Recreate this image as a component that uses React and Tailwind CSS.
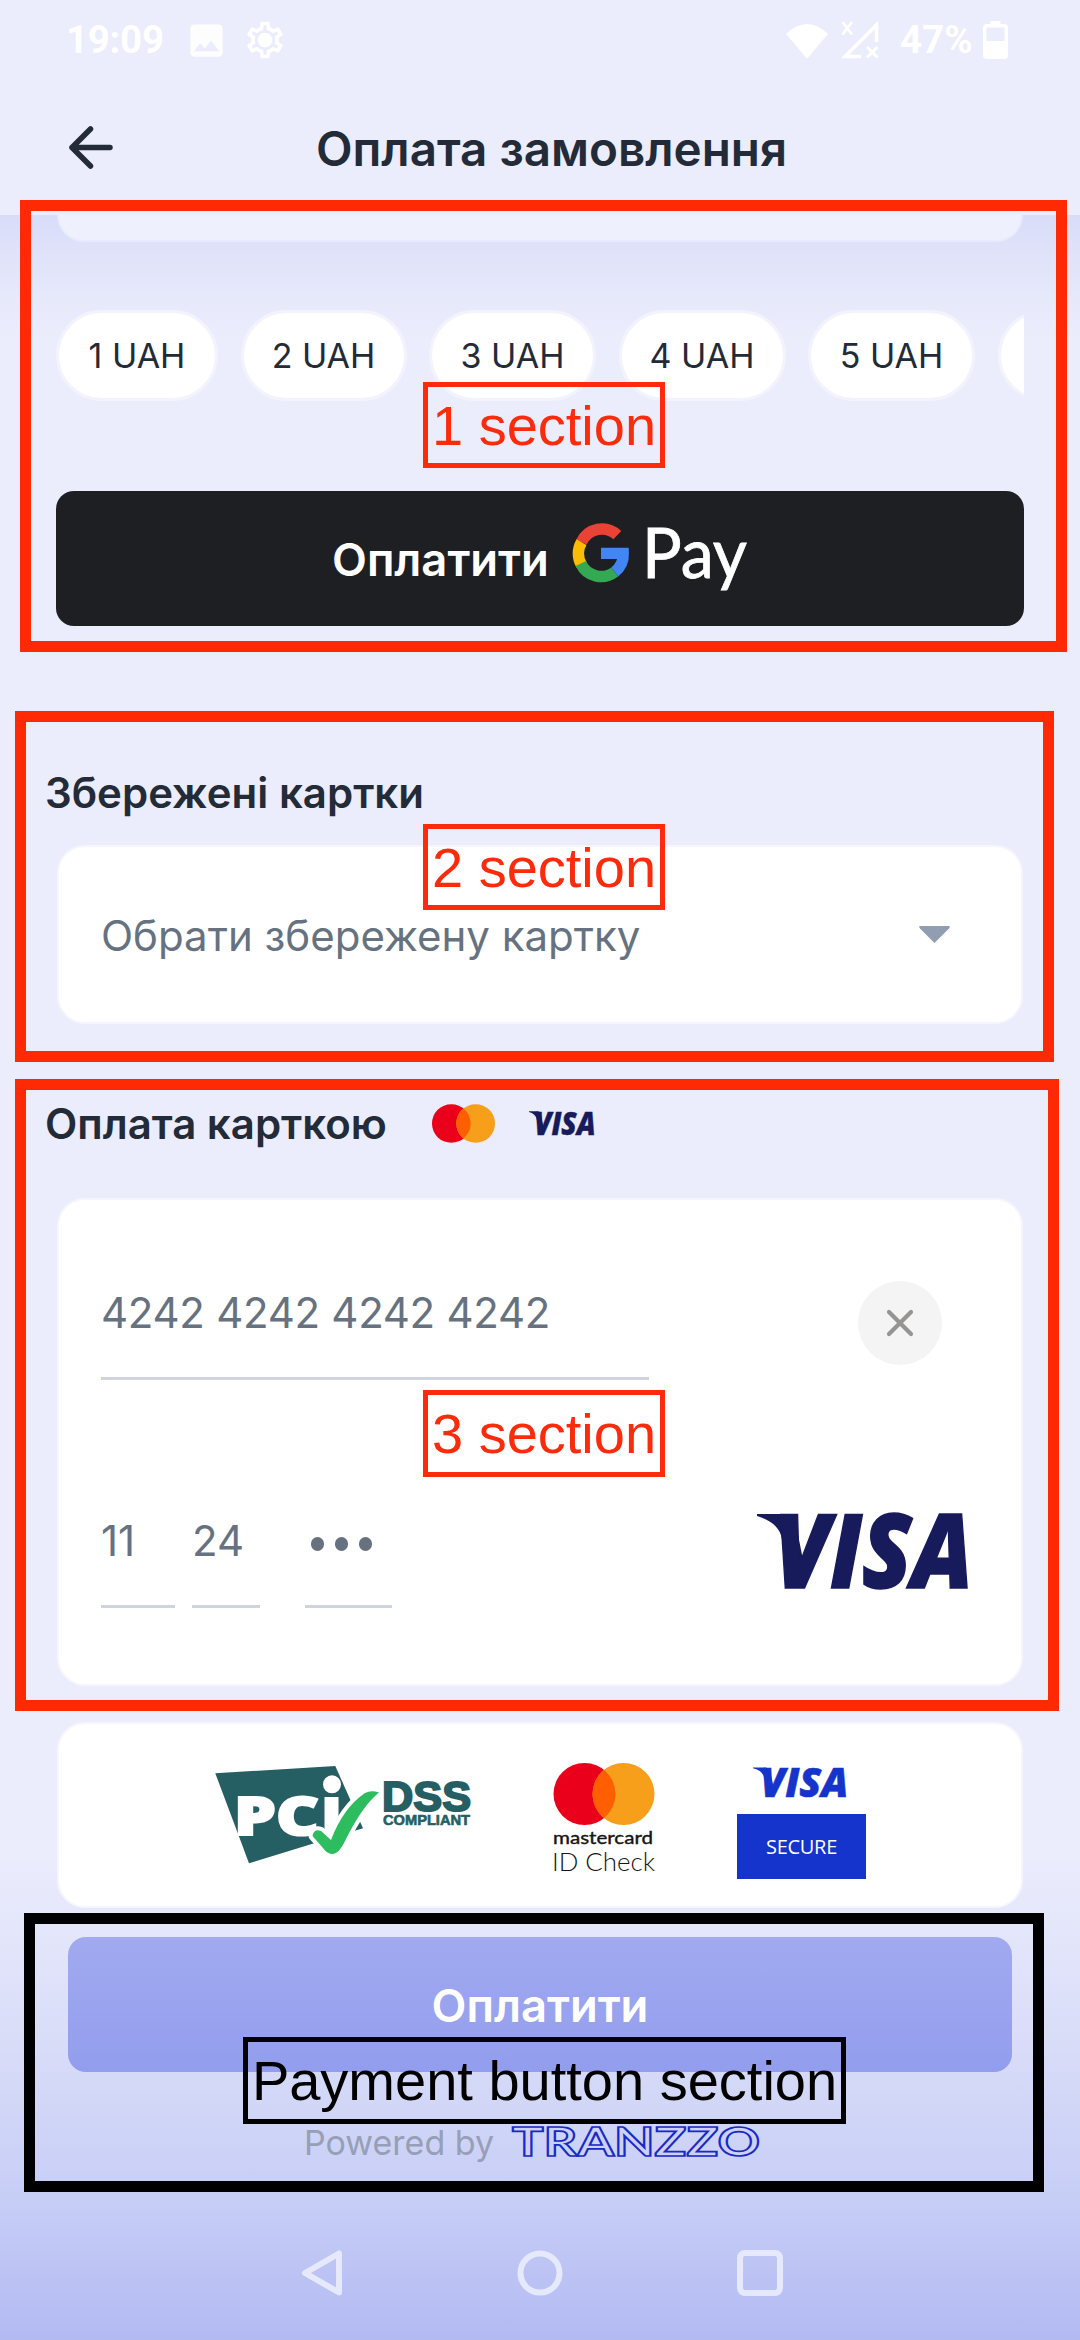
import React from "react";
import { MdImage, MdOutlineSettings } from "react-icons/md";

const amounts = [
  { label: "1 UAH", cls: "w-[162px]" },
  { label: "2 UAH", cls: "w-[166px]" },
  { label: "3 UAH", cls: "w-[167px]" },
  { label: "4 UAH", cls: "w-[167px]" },
  { label: "5 UAH", cls: "w-[167px]" },
  { label: "", cls: "w-[166px]" },
];

function Visa({ className, color }) {
  return (
    <svg className={"overflow-visible " + className} viewBox="0 0 211 75" fill={color} preserveAspectRatio="none">
      <path d="M0 1 H29 Q36.500 2 38.500 9 L50 66 L33 60 L24 22 Q20 9 0 3 Z" />
      <text
        x="17"
        y="74"
        fontFamily="Open Sans"
        fontWeight="800"
        fontStyle="italic"
        fontSize="102"
        stroke={color}
        strokeWidth="1.500"
        textLength="199"
        lengthAdjust="spacingAndGlyphs"
      >
        VISA
      </text>
    </svg>
  );
}

function Mastercard({ className }) {
  return (
    <svg className={className} viewBox="0 0 101 62">
      <circle cx="31" cy="31" r="31" fill="#eb001b" />
      <circle cx="70" cy="31" r="31" fill="#f79e1b" />
      <path d="M50.5 6.9 A31 31 0 0 1 50.5 55.1 A31 31 0 0 1 50.5 6.9 Z" fill="#ff5f00" />
    </svg>
  );
}

function StatusBar() {
  return (
    <div className="flex h-20 shrink-0 items-start text-white">
      <div className="ml-[66px] mt-[15px] w-[119px] font-[Roboto] text-[38.500px] font-bold leading-[50px] tracking-[-0.3px]">19:09</div>
      <MdImage className="mt-[19px] h-[43px] w-[43px] opacity-90" />
      <svg className="ml-[15px] mt-[18px] h-[44px] w-[44px]" viewBox="0 0 44 44">
        <MdOutlineSettings width="44" height="44" size={44} />
        <circle cx="22" cy="22" r="6.5" fill="#fff" />
      </svg>
      <svg className="ml-[499px] mt-[22px] h-[38px] w-[42px]" viewBox="0 0 42 38" fill="#fff">
        <path d="M0 12 Q21 -8 42 12 L22.5 35 Q21 37 19.500 35 Z" />
      </svg>
      <svg className="ml-[13px] mt-[20px] h-[39px] w-[38px]" viewBox="0 0 38 39" fill="none" stroke="#fff">
        <path d="M20 36.500 H4 L35.500 5 V22" strokeWidth="3.500" />
        <path d="M26 27 L36.500 37.500 M36.500 27 L26 37.500" strokeWidth="3" />
        <path d="M1.500 2 L11 14.500 M11 2 L1.500 14.500" strokeWidth="2.700" />
      </svg>
      <div className="ml-[21px] mt-[15px] w-[83px] font-[Roboto] text-[38.500px] font-bold leading-[50px]">47%</div>
      <svg className="mt-[21px] h-[38px] w-[25px]" viewBox="0 0 25 38" fill="none">
        <path d="M7.500 0 H17.500 V4 H7.500 Z" fill="#fff" />
        <rect x="1.750" y="4.750" width="21.500" height="31.500" rx="2" stroke="#fff" strokeWidth="3.500" />
        <path d="M2 20 H23 V36 H2 Z" fill="#fff" />
      </svg>
    </div>
  );
}

function Header() {
  return (
    <div className="flex h-[135px] shrink-0">
      <svg className="ml-[68px] mt-[45px] h-[45px] w-[46px]" viewBox="0 0 46 45" fill="none" stroke="#232b38" strokeWidth="5.500" strokeLinecap="round" strokeLinejoin="round">
        <path d="M42 22.500 H4 M22.500 4 L4 22.500 L22.500 41" />
      </svg>
      <h1 className="ml-[202px] mt-[39px] whitespace-nowrap text-[47.600px] font-semibold leading-[60px] text-[#232b38]">
        Оплата замовлення
      </h1>
    </div>
  );
}

function GooglePay() {
  return (
    <svg className="ml-[25px] mt-[32px] h-[76px] w-[190px] overflow-visible" viewBox="0 0 190 76">
      <g fill="none" strokeWidth="11.500">
        <path d="M45.300 12.100 A22.500 22.500 0 0 0 9.500 19.100" stroke="#ea4335" />
        <path d="M9.500 19.100 A22.500 22.500 0 0 0 9.500 41.900" stroke="#fbbc04" />
        <path d="M8.800 40.500 A22.500 22.500 0 0 0 42.700 49.000" stroke="#34a853" />
        <path d="M42.700 49.000 A22.500 22.500 0 0 0 51.300 30.300 H29" stroke="#4285f4" strokeWidth="11.300" />
      </g>
      <text x="70" y="54.500" fill="#fff" stroke="#fff" strokeWidth="0.800" fontFamily="Lato" fontSize="69" textLength="105" lengthAdjust="spacingAndGlyphs">
        Pay
      </text>
    </svg>
  );
}

function PciLogo() {
  return (
    <svg className="ml-[155px] mt-[26px] h-[130px] w-[280px] overflow-visible" viewBox="0 0 280 130">
      <path d="M15.300 23.300 L135.300 16 L163 78.300 L49 113.300 Z" fill="#265f63" />
      <g fill="#fff" stroke="#fff">
        <text x="34" y="85" fontFamily="Open Sans" fontWeight="800" fontSize="53" strokeWidth="2" textLength="85" lengthAdjust="spacingAndGlyphs">
          PC
        </text>
        <rect x="124.500" y="47" width="14" height="38" stroke="none" />
        <circle cx="132" cy="34.300" r="9" stroke="none" />
      </g>
      <path
        d="M112.500 86 Q114 78 121 81 L131 90 Q143 58 165 43 Q171 40 179 42.500 Q162 56 144 93 Q139 103 133 104 Q127 104 123 98 Z"
        fill="#2dbd5f"
        stroke="#fff"
        strokeWidth="8"
        strokeLinejoin="round"
        paintOrder="stroke"
      />
      <g fill="#265f63" stroke="#265f63" fontFamily="Liberation Sans" fontWeight="700">
        <text x="182" y="60.500" fontSize="42" strokeWidth="2" textLength="89" lengthAdjust="spacingAndGlyphs">DSS</text>
        <text x="183" y="75" fontSize="14" strokeWidth="0.600" textLength="87" lengthAdjust="spacingAndGlyphs">COMPLIANT</text>
      </g>
    </svg>
  );
}

function Tag({ className, children }) {
  return (
    <div className={"absolute flex justify-center whitespace-nowrap border-[5px] font-['Liberation_Sans'] text-[56px] leading-[77px] " + className}>
      {children}
    </div>
  );
}

export default function App() {
  return (
    <div className="relative flex h-[2340px] w-[1080px] flex-col overflow-hidden bg-[#ebecfc] font-[Inter,sans-serif]">
      <StatusBar />
      <Header />

      <main className="flex grow flex-col bg-[linear-gradient(180deg,#d8dcf9_0px,#dfe2f9_35px,#e6e9fb_80px,#ebecfc_120px,#ebecfc_1640px,#d8dcf8_1835px,#c6cdf6_1990px,#b3baf2_2125px)] px-[57px]">
        <section>
          <div className="h-[27px] rounded-b-[28px] border-x-2 border-b-2 border-[#e8ebfb] bg-[#eef0fd]" />
          <div className="-mx-px mt-[68px] flex gap-[22.500px] overflow-hidden">
            {amounts.map((a) => (
              <div key={a.cls + a.label} className={"flex h-[91px] shrink-0 items-center justify-center rounded-full border-[3px] border-[#f2f3fc] bg-white text-[34px] text-[#232b38] " + a.cls}>
                {a.label}
              </div>
            ))}
          </div>
          <div className="-mx-px mt-[90px] flex h-[135px] rounded-[18px] bg-[#1e1f23] pl-[276px]">
            <div className="mt-[39px] w-[215px] whitespace-nowrap text-[45.400px] font-semibold leading-[60px] text-white">Оплатити</div>
            <GooglePay />
          </div>
        </section>

        <section className="mt-[137px]">
          <h2 className="-ml-[12px] whitespace-nowrap text-[42px] font-semibold leading-[60px] text-[#232b38]">Збережені картки</h2>
          <div className="mt-[22px] flex h-[179px] rounded-[28px] border-[2px] border-[#f5f6fd] bg-white">
            <div className="ml-[42px] mt-[59px] w-[760px] whitespace-nowrap text-[42px] leading-[60px] text-[#66727f]">Обрати збережену картку</div>
            <svg className="ml-[58px] mt-[79px] h-[17px] w-[31px]" viewBox="0 0 31 17">
              <path d="M1.500 0 H29.500 Q32 0 30 2.500 L15.500 17 L1 2.500 Q-1 0 1.500 0 Z" fill="#919db0" />
            </svg>
          </div>
        </section>

        <section className="mt-[70px]">
          <div className="-ml-[12px] flex h-[60px]">
            <h2 className="w-[387px] whitespace-nowrap text-[42px] font-semibold leading-[60px] text-[#232b38]">Оплата карткою</h2>
            <Mastercard className="mt-[10px] h-[39px] w-[63px]" />
            <Visa className="ml-[34px] mt-[17px] h-[24px] w-[65px]" color="#171a5b" />
          </div>
          <div className="mt-[44px] h-[488px] rounded-[28px] border-[2px] border-[#f5f6fd] bg-white">
            <div className="flex">
              <div className="ml-[42px] mt-[81px] h-[99px] w-[548px] whitespace-nowrap border-b-[3px] border-[#d0d4df] text-[42px] leading-[64px] tracking-[-0.3px] text-[#66727f]">
                4242 4242 4242 4242
              </div>
              <div className="ml-[209px] mt-[81px] flex h-[84px] w-[84px] items-center justify-center rounded-full bg-[#f4f4f4]">
                <svg className="h-[28px] w-[28px]" viewBox="0 0 28 28" stroke="#969492" strokeWidth="4.200" strokeLinecap="round">
                  <path d="M3 3 L25 25 M25 3 L3 25" />
                </svg>
              </div>
            </div>
            <div className="ml-[42px] mt-[128px] flex text-[42px] leading-[66px] text-[#66727f]">
              <div className="h-[100px] w-[74px] border-b-[3px] border-[#d0d4df]">11</div>
              <div className="ml-[17px] h-[100px] w-[68px] border-b-[3px] border-[#d0d4df]">24</div>
              <div className="ml-[45px] flex h-[100px] w-[87px] gap-[11px] border-b-[3px] border-[#d0d4df] pl-[6px] pt-[29px]">
                <i className="h-[14px] w-[13px] rounded-full bg-[#66727f]" />
                <i className="h-[14px] w-[13px] rounded-full bg-[#66727f]" />
                <i className="h-[14px] w-[13px] rounded-full bg-[#66727f]" />
              </div>
              <Visa className="ml-[365px] mt-[5px] h-[76px] w-[211px]" color="#171a5b" />
            </div>
          </div>
        </section>

        <section className="mt-[36px] flex h-[186px] shrink-0 rounded-[28px] border-[2px] border-[#f5f6fd] bg-white">
          <div className="-ml-[14px] w-[435px]">
            <PciLogo />
          </div>
          <div className="ml-[73px] mt-[39px] w-[102px]">
            <Mastercard className="h-[62px] w-[102px]" />
            <svg className="h-[52px] w-[110px] overflow-visible" viewBox="0 0 110 52" fill="#151515">
              <text x="0" y="18.500" fontFamily="Lato" fontWeight="400" fontSize="18" stroke="#151515" strokeWidth="0.400" textLength="100" lengthAdjust="spacingAndGlyphs">mastercard</text>
              <text x="-1" y="46" fontFamily="Lato" fontWeight="300" fontSize="25" textLength="103" lengthAdjust="spacingAndGlyphs">ID Check</text>
            </svg>
          </div>
          <div className="ml-[82px] mt-[43px] w-[129px]">
            <Visa className="ml-[16px] h-[30px] w-[93px]" color="#1434cb" />
            <div className="mt-[17px] flex h-[65px] items-center justify-center bg-[#1434cb] font-['Open_Sans'] text-[20px] font-medium tracking-[-0.3px] text-white">
              SECURE
            </div>
          </div>
        </section>

        <section>
          <button className="mx-[11px] mt-[29px] flex h-[135px] w-[944px] justify-center rounded-[18px] bg-[linear-gradient(180deg,#a1aaef,#929dee)] pt-[39px] text-[45.400px] font-semibold leading-[60px] text-white">
            Оплатити
          </button>
          <div className="mt-[41px] flex h-[60px] text-[34px] leading-[60px] text-[#969fb6]">
            <span className="ml-[247px] w-[208px] whitespace-nowrap">Powered by</span>
            <svg className="mt-[8px] h-[44px] w-[260px] overflow-visible" viewBox="0 0 260 44">
              <text x="0" y="35" fill="#cbd1f7" stroke="#1729c8" strokeWidth="1.700" fontFamily="Lato" fontWeight="700" fontSize="40" textLength="248" lengthAdjust="spacingAndGlyphs">
                TRANZZO
              </text>
            </svg>
          </div>
        </section>

        <nav className="mt-[77px]">
          <svg className="ml-[244px] h-[46px] w-[484px]" viewBox="0 0 484 46" fill="none" stroke="#e6e9fb" strokeWidth="6" strokeLinejoin="round">
            <path d="M38 3.500 V42.500 L4 23 Z" />
            <circle cx="239" cy="23" r="19.500" />
            <rect x="439" y="3" width="40" height="40" rx="5" />
          </svg>
        </nav>
      </main>

      <div className="absolute left-[20px] top-[200px] h-[452px] w-[1047px] border-[11px] border-[#ff2a04]" />
      <Tag className="left-[423px] top-[382px] h-[86px] w-[242px] border-[#fb2b0b] text-[#fb2b0b]">1 section</Tag>
      <div className="absolute left-[15px] top-[711px] h-[351px] w-[1039px] border-[11px] border-[#ff2a04]" />
      <Tag className="left-[423px] top-[824px] h-[86px] w-[242px] border-[#fb2b0b] text-[#fb2b0b]">2 section</Tag>
      <div className="absolute left-[15px] top-[1079px] h-[632px] w-[1044px] border-[11px] border-[#ff2a04]" />
      <Tag className="left-[423px] top-[1390px] h-[87px] w-[242px] border-[#fb2b0b] text-[#fb2b0b]">3 section</Tag>
      <div className="absolute left-[24px] top-[1913px] h-[279px] w-[1020px] border-[11px] border-black" />
      <Tag className="left-[243px] top-[2037px] h-[87px] w-[603px] border-black text-black">Payment button section</Tag>
    </div>
  );
}
